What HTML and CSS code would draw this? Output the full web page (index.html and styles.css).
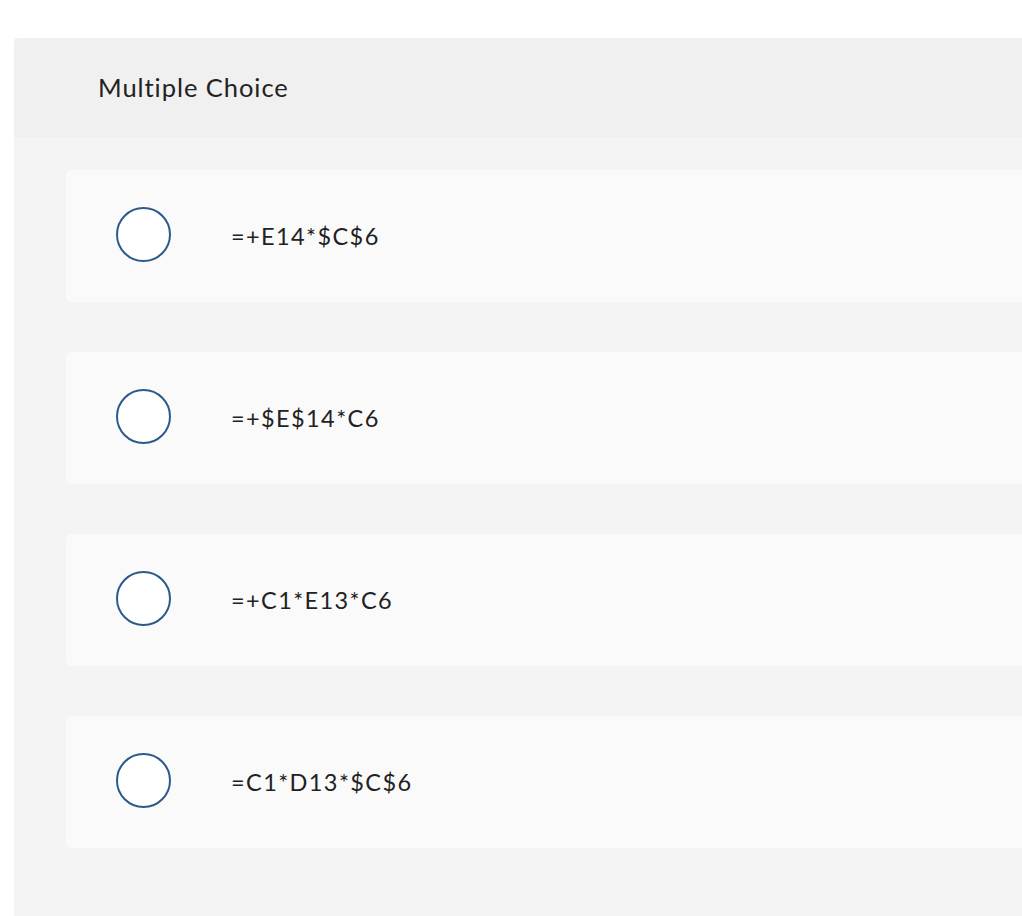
FILE: index.html
```html
<!DOCTYPE html>
<html lang="en">
<head>
<meta charset="utf-8">
<title>Multiple Choice</title>
<link rel="stylesheet" href="styles.css">
</head>
<body>
<section class="panel">
  <div class="panel-header">Multiple Choice</div>
  <div class="options">
    <label class="option"><span class="radio"></span><span class="option-text">=+E14*$C$6</span></label>
    <label class="option"><span class="radio"></span><span class="option-text">=+$E$14*C6</span></label>
    <label class="option"><span class="radio"></span><span class="option-text">=+C1*E13*C6</span></label>
    <label class="option"><span class="radio"></span><span class="option-text">=C1*D13*$C$6</span></label>
  </div>
</section>
</body>
</html>
```
FILE: styles.css
```css
html, body {
  margin: 0;
  padding: 0;
  background: #ffffff;
  overflow: hidden;
  height: 916px;
}
body {
  font-family: "Lato", "Open Sans", sans-serif;
  font-variant-ligatures: none;
  color: #222222;
}
.panel {
  margin: 38px 0 0 14px;
  height: 878px;
  background: #f4f4f4;
  border-top-left-radius: 4px;
}
.panel-header {
  height: 99px;
  background: #f0f0f0;
  border-top-left-radius: 4px;
  display: flex;
  align-items: center;
  padding-left: 84px;
  padding-bottom: 1px;
  font-size: 25.5px;
  letter-spacing: 0.95px;
  box-sizing: border-box;
}
.options {
  display: flex;
  flex-direction: column;
  gap: 50px;
  padding: 33px 0 0 52px;
}
.option {
  height: 132px;
  background: #fafafa;
  border-radius: 6px 0 0 6px;
  display: flex;
  align-items: center;
  padding-left: 50px;
}
.radio {
  width: 51px;
  height: 51px;
  border: 2px solid #2c5a8c;
  border-radius: 50%;
  background: #ffffff;
  flex: none;
  margin-top: -3px;
}
.option-text {
  margin-left: 60px;
  font-size: 23.5px;
  letter-spacing: 1.4px;
}
```
